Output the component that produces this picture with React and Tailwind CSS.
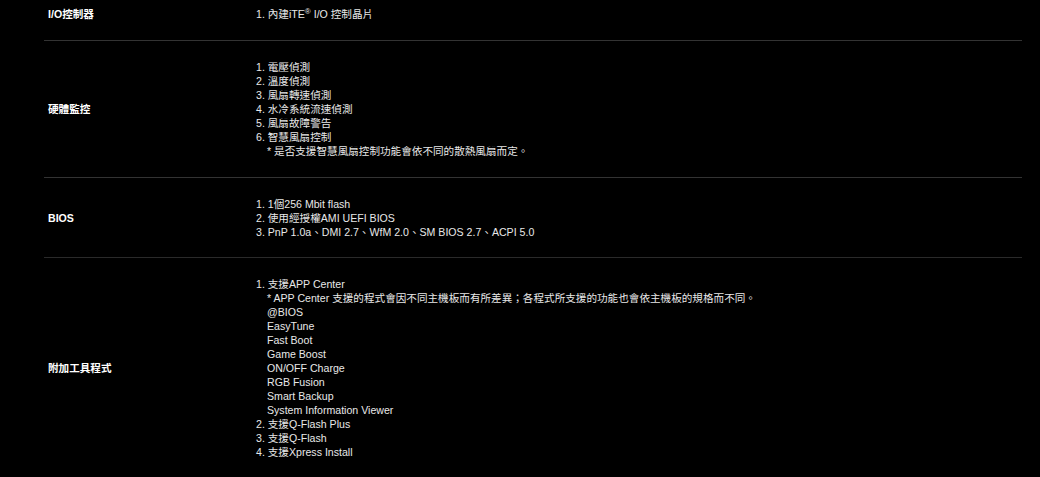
import React from 'react';

const rows = [
  {
    label: 'I/O控制器',
    pad: 'pt-[7px] pb-[19px] border-b border-[#333333]',
    lines: [
      { text: (<>1. 內建iTE<span className="text-[8px] leading-none relative -top-[4px]">®</span> I/O 控制晶片</>) }
    ]
  },
  {
    label: '硬體監控',
    pad: 'pt-[19px] pb-[19px] border-b border-[#333333]',
    lines: [
      { text: '1. 電壓偵測' },
      { text: '2. 溫度偵測' },
      { text: '3. 風扇轉速偵測' },
      { text: '4. 水冷系統流速偵測' },
      { text: '5. 風扇故障警告' },
      { text: '6. 智慧風扇控制' },
      { text: '* 是否支援智慧風扇控制功能會依不同的散熱風扇而定。', indent: true }
    ]
  },
  {
    label: 'BIOS',
    pad: 'pt-[19px] pb-[18px] border-b border-[#2a2a2a]',
    lines: [
      { text: '1. 1個256 Mbit flash' },
      { text: '2. 使用經授權AMI UEFI BIOS' },
      { text: '3. PnP 1.0a、DMI 2.7、WfM 2.0、SM BIOS 2.7、ACPI 5.0' }
    ]
  },
  {
    label: '附加工具程式',
    pad: 'pt-[19px] pb-[19px]',
    lines: [
      { text: '1. 支援APP Center' },
      { text: '* APP Center 支援的程式會因不同主機板而有所差異；各程式所支援的功能也會依主機板的規格而不同。', indent: true },
      { text: '@BIOS', indent: true },
      { text: 'EasyTune', indent: true },
      { text: 'Fast Boot', indent: true },
      { text: 'Game Boost', indent: true },
      { text: 'ON/OFF Charge', indent: true },
      { text: 'RGB Fusion', indent: true },
      { text: 'Smart Backup', indent: true },
      { text: 'System Information Viewer', indent: true },
      { text: '2. 支援Q-Flash Plus' },
      { text: '3. 支援Q-Flash' },
      { text: '4. 支援Xpress Install' }
    ]
  }
];

const App = () => {
  return (
    <div
      className="w-[1040px] h-[477px] overflow-hidden bg-black text-[#e8e8e8] text-[10.6px] leading-[14px]"
      style={{ fontFamily: '"Liberation Sans", Arial, "Noto Sans CJK TC", sans-serif' }}
    >
      <div className="ml-[44px] w-[978px]">
        {rows.map((row) => (
          <div key={row.label} className={`flex items-center ${row.pad}`}>
            <div className="w-[212px] shrink-0 pl-[4px] font-bold text-white">{row.label}</div>
            <div className="flex flex-col">
              {row.lines.map((line, i) => (
                <div key={i} className={`whitespace-nowrap h-[14px] ${line.indent ? 'pl-[11px]' : ''}`}>
                  {line.text}
                </div>
              ))}
            </div>
          </div>
        ))}
      </div>
    </div>
  );
};

export default App;
